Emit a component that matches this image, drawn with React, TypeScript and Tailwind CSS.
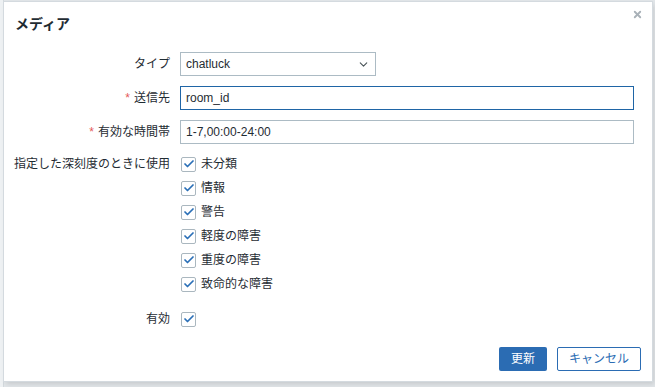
import { ChevronDown, X, Check } from 'lucide-react'

const font = "font-['Liberation_Sans','Noto_Sans_CJK_JP',sans-serif]"

const severities = ['未分類', '情報', '警告', '軽度の障害', '重度の障害', '致命的な障害']

function Box() {
  return (
    <span className="flex h-[15px] w-[15px] items-center justify-center rounded-[2px] border border-[#aab7bf] bg-white">
      <Check className="h-[12px] w-[12px] text-[#2a6fb7]" strokeWidth={3.5} />
    </span>
  )
}

function Label({ text, required }: { text: string; required?: boolean }) {
  return (
    <div className="flex h-[24px] items-center justify-end whitespace-nowrap text-[12px] text-[#1f2c33]">
      {required && <span className="mr-[4px] text-[#e45959]">*</span>}
      {text}
    </div>
  )
}

export default function App() {
  return (
    <div className={`h-[387px] w-[655px] overflow-hidden bg-[#e1e5e8] ${font}`}>
      <div className="flex h-full">
        <div className="w-[4px] border-r border-[#d3d9dd] bg-[#eef1f3]" />
        <div className="mt-[2px] h-[379px] w-[648px] bg-white shadow-[2px_3px_5px_rgba(0,0,0,0.12)] outline outline-1 outline-[#d4dadf]">
          <div className="relative flex h-[44px] items-center pl-[11px]">
            <h4 className="text-[14px] font-bold text-[#1f2c33]">メディア</h4>
            <X className="absolute right-[9px] top-[7px] h-[11px] w-[11px] text-[#a9b1b8]" strokeWidth={4} />
          </div>

          <div className="grid grid-cols-[155px_1fr] gap-x-[10px] pl-[11px] pr-[18px] pt-[6px]">
            <Label text="タイプ" />
            <div className="flex h-[24px] w-[196px] items-center justify-between border border-[#acbbc4] pl-[5px] pr-[5px] text-[12px] text-[#1f2c33]">
              <span>chatluck</span>
              <ChevronDown className="h-[13px] w-[13px] text-[#4a5559]" strokeWidth={2} />
            </div>

            <div className="mt-[10px]">
              <Label text="送信先" required />
            </div>
            <div className="mt-[10px] flex h-[24px] items-center border border-[#1f65a6] px-[5px] text-[12px] text-[#1f2c33]">
              room_id
            </div>

            <div className="mt-[10px]">
              <Label text="有効な時間帯" required />
            </div>
            <div className="mt-[10px] flex h-[24px] items-center border border-[#acbbc4] px-[5px] text-[12px] text-[#1f2c33]">
              1-7,00:00-24:00
            </div>

            <div className="mt-[8px]">
              <Label text="指定した深刻度のときに使用" />
            </div>
            <div className="mt-[8px] flex flex-col">
              {severities.map((s) => (
                <div key={s} className="flex h-[24px] items-center gap-[5px] pl-[1px] text-[12px] text-[#1f2c33]">
                  <Box />
                  <span>{s}</span>
                </div>
              ))}
            </div>

            <div className="mt-[11px]">
              <Label text="有効" />
            </div>
            <div className="mt-[11px] flex h-[24px] items-center pl-[1px]">
              <Box />
            </div>
          </div>

          <div className="mt-[16px] flex justify-end gap-[10px] pr-[11px]">
            <button className="h-[24px] w-[48px] rounded-[2px] bg-[#2b6cb3] text-[12px] text-white">更新</button>
            <button className="h-[24px] w-[84px] rounded-[2px] border border-[#2b6cb3] bg-white text-[12px] text-[#2b6cb3]">
              キャンセル
            </button>
          </div>
        </div>
      </div>
    </div>
  )
}
